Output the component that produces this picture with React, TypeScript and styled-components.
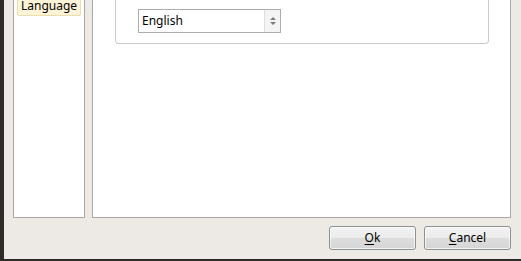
import React from "react";
import styled, { createGlobalStyle } from "styled-components";

const Global = createGlobalStyle`
  html, body { margin: 0; padding: 0; background: #edeae6; }
  body { font-family: "Noto Sans", "Open Sans", sans-serif; font-size: 12px; color: #000; }
  #root { width: 521px; height: 261px; overflow: hidden; }
`;

const Dialog = styled.div`
  box-sizing: border-box;
  width: 521px;
  height: 261px;
  border-left: 4px solid #2d2a28;
  border-bottom: 2px solid #2d2a28;
  background: #edeae6;
  display: flex;
  flex-direction: column;
  overflow: hidden;
`;

const Body = styled.div`
  display: flex;
  gap: 7px;
  margin: -30px 10px 0 9px;
  height: 248px;
`;

const ListPanel = styled.div`
  box-sizing: border-box;
  width: 72px;
  background: #fff;
  border: 1px solid #aaa8a5;
  padding: 0 3px;
  display: flex;
  flex-direction: column;
`;

const ListItem = styled.div<{ $selected?: boolean }>`
  box-sizing: border-box;
  height: 21px;
  margin-top: 24px;
  padding-left: 3px;
  line-height: 19px;
  background: ${(p) => (p.$selected ? "#fdf3d7" : "transparent")};
  border: 1px solid ${(p) => (p.$selected ? "#ecdcae" : "transparent")};
  border-radius: 2px;
  white-space: nowrap;
`;

const ContentPanel = styled.div`
  box-sizing: border-box;
  flex: 1;
  background: #fff;
  border: 1px solid #aaa8a5;
  padding: 0 21px 0 22px;
`;

const GroupBox = styled.div`
  box-sizing: border-box;
  height: 73px;
  border: 1px solid #cacaca;
  border-radius: 4px;
  border-top: none;
  display: flex;
  align-items: flex-end;
  padding: 0 0 10px 22px;
`;

const Select = styled.div`
  box-sizing: border-box;
  width: 143px;
  height: 24px;
  border: 1px solid #acacac;
  background: #fff;
  display: flex;
  align-items: stretch;
`;

const SelectText = styled.div`
  flex: 1;
  padding-left: 3px;
  line-height: 21px;
`;

const Spin = styled.div`
  width: 15px;
  border-left: 1px solid #dedede;
  background: #f4f4f4;
  display: flex;
  flex-direction: column;
  align-items: center;
  justify-content: center;
  gap: 2px;
`;

const Arrow = styled.div<{ $up?: boolean }>`
  width: 0;
  height: 0;
  border-left: 3px solid transparent;
  border-right: 3px solid transparent;
  ${(p) =>
    p.$up ? "border-bottom: 3px solid #7a7a7a;" : "border-top: 3px solid #7a7a7a;"}
`;

const Footer = styled.div`
  display: flex;
  justify-content: flex-end;
  gap: 8px;
  margin: 8px 10px 0 0;
`;

const Button = styled.button`
  box-sizing: border-box;
  width: 87px;
  height: 24px;
  border: 1px solid #8e8f8f;
  border-radius: 3px;
  background: linear-gradient(#f3f3f3 0%, #ebebeb 50%, #dddddd 51%, #d6d6d6 100%);
  box-shadow: inset 0 0 0 1px rgba(255, 255, 255, 0.7);
  font-family: "Noto Sans", "Open Sans", sans-serif;
  font-size: 12px;
  color: #000;
  padding: 0;
  line-height: 20px;
`;

const U = styled.span`
  text-decoration: underline;
  text-underline-offset: 2px;
`;

export default function App() {
  return (
    <>
      <Global />
      <Dialog>
        <Body>
          <ListPanel>
            <ListItem $selected>Language</ListItem>
          </ListPanel>
          <ContentPanel>
            <GroupBox>
              <Select>
                <SelectText>English</SelectText>
                <Spin>
                  <Arrow $up />
                  <Arrow />
                </Spin>
              </Select>
            </GroupBox>
          </ContentPanel>
        </Body>
        <Footer>
          <Button>
            <U>O</U>k
          </Button>
          <Button>
            <U>C</U>ancel
          </Button>
        </Footer>
      </Dialog>
    </>
  );
}
